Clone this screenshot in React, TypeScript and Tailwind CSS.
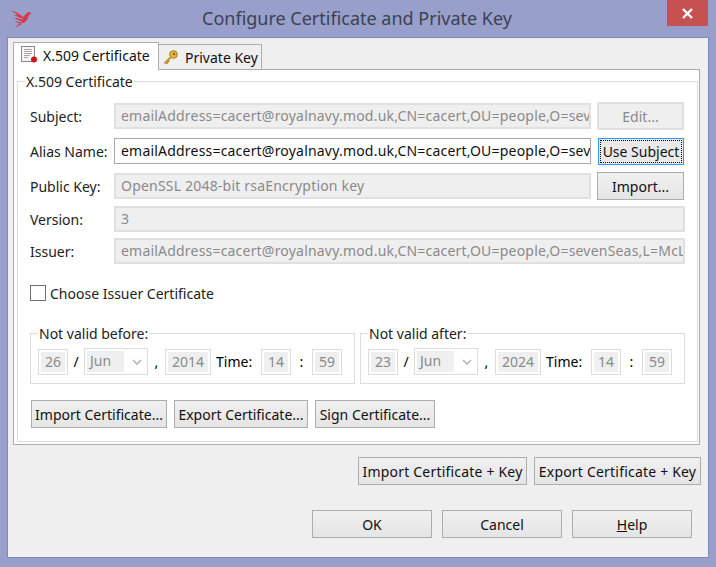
import type React from "react"

const font = "font-['Noto_Sans',sans-serif]"

function DisabledField({ value, className }: { value: string; className: string }) {
  return (
    <div className={`h-[26px] bg-[#efefef] border-2 border-[#e0e0e0] pl-[5px] text-[#8a8a8a] tracking-[0.2px] leading-[22px] overflow-hidden whitespace-nowrap ${className}`}>
      {value}
    </div>
  )
}

function Btn({ children, className = "" }: { children: React.ReactNode; className?: string }) {
  return (
    <div className={`h-[28px] flex items-center justify-center border border-[#adadad] bg-gradient-to-b from-[#f0f0f0] to-[#e5e5e5] text-[#111] whitespace-nowrap ${className}`}>
      {children}
    </div>
  )
}

function Row({ label, children, className = "" }: { label: string; children: React.ReactNode; className?: string }) {
  return (
    <div className={`flex items-center ${className}`}>
      <div className="w-[96px] pl-[12px] text-[#222] whitespace-nowrap">{label}</div>
      {children}
    </div>
  )
}

function SmallBox({ value, className }: { value: string; className: string }) {
  return (
    <div className={`h-[26px] border border-[#dcdcdc] p-[2px] ${className}`}>
      <div className="h-full bg-[#efefef] text-[#8a8a8a] text-center leading-[20px]">{value}</div>
    </div>
  )
}

function DateGroup({ title, day, year, className }: { title: string; day: string; year: string; className: string }) {
  return (
    <fieldset className={`border border-[#dcdcdc] h-[59px] ${className}`}>
      <legend className="ml-[7px] px-[1px] leading-[17px] text-[#222]">{title}</legend>
      <div className="flex items-center pl-[7px] mt-[6px]">
        <SmallBox value={day} className="w-[30px]" />
        <span className="w-[16px] text-center">/</span>
        <div className="h-[27px] w-[64px] border border-[#dcdcdc] p-[2px] flex items-center">
          <div className="w-[37px] h-full bg-[#efefef] text-[#8a8a8a] pl-[3px] leading-[20px]">Jun</div>
          <svg width="10" height="6" viewBox="0 0 10 6" className="ml-[8px]">
            <path d="M1 1l4 4 4-4" fill="none" stroke="#b5b5b5" strokeWidth="1.6" />
          </svg>
        </div>
        <span className="w-[17px] text-center">,</span>
        <SmallBox value={year} className="w-[46px]" />
        <span className="ml-[5px] w-[45px]">Time:</span>
        <SmallBox value="14" className="w-[30px]" />
        <span className="w-[21px] text-center">:</span>
        <SmallBox value="59" className="w-[30px]" />
      </div>
    </fieldset>
  )
}

export default function App() {
  return (
    <div className={`w-[716px] h-[567px] bg-[#989fcb] overflow-hidden relative text-[14px] ${font}`}>
      {/* Title bar */}
      <div className="h-[37px] flex items-center justify-center text-[18px] text-[#3c4252] pr-[2px] pb-[1px]">
        Configure Certificate and Private Key
      </div>
      <svg width="24" height="20" viewBox="0 0 24 20" className="absolute left-[9px] top-[9px]">
        <path d="M1 1l8 3 5 4 5-5 4 1-3 2-2 5-3 3-5 0-4-1 5-1-6-3 6 0-6-3 4 0z" fill="#d8384a" />
        <path d="M5 8l9 2M6 11l7 2" stroke="#989fcb" strokeWidth="1" />
        <path d="M6 18l5-4 2 1-4 2z" fill="#d8384a" />
      </svg>
      <div className="absolute right-[8px] top-0 w-[41px] h-[26px] bg-[#c75050] flex items-center justify-center">
        <svg width="11" height="11" viewBox="0 0 11 11">
          <path d="M1 1l9 9M10 1l-9 9" stroke="#fff" strokeWidth="2.4" />
        </svg>
      </div>

      {/* Dialog body */}
      <div className="mx-[7px] h-[521px] border border-[#7f88b4] bg-[#efefef] px-[5px] pt-[4px]">
        {/* Tabs */}
        <div className="flex items-end h-[27px]">
          <div className="h-[28px] w-[146px] bg-white border border-b-0 border-[#adadad] flex items-center pl-[7px] gap-[4px] pb-[3px] z-10 -mb-[1px] text-[#111]">
            <svg width="18" height="18" viewBox="0 0 18 18">
              <rect x="0.5" y="0.5" width="13" height="15" fill="#f6f6f6" stroke="#8a8a8a" />
              <path d="M3 3.5h8M3 5.5h8M3 7.5h8M3 9.5h6M3 11.5h4" stroke="#a8a8a8" />
              <circle cx="13" cy="13.5" r="3" fill="#d8101c" />
            </svg>
            X.509 Certificate
          </div>
          <div className="h-[25px] w-[103px] bg-[#efefef] border border-l-0 border-b-0 border-[#adadad] flex items-center pl-[3px] gap-[6px] text-[#111]">
            <svg width="17" height="17" viewBox="0 0 16 17">
              <circle cx="11" cy="5.5" r="3.8" fill="#e6b83e" stroke="#a87c1c" />
              <circle cx="11.5" cy="5" r="1.2" fill="#8a6414" />
              <path d="M8.5 8L2 14.5M3.5 13l2 1.5M5.2 11.3l1.5 1.5" stroke="#c2922a" strokeWidth="1.8" fill="none" />
            </svg>
            Private Key
          </div>
        </div>

        {/* Certificate pane */}
        <div className="w-[687px] h-[376px] bg-white border border-[#adadad] pt-[3px] pl-[3px] pr-[1px]">
          <fieldset className="border border-[#dcdcdc] h-[369px]">
            <legend className="ml-[7px] px-[1px] leading-[17px] text-[#222]">X.509 Certificate</legend>
            <div className="flex flex-col mt-[11px]">
              <Row label="Subject:" className="h-[30px]">
                <DisabledField value="emailAddress=cacert@royalnavy.mod.uk,CN=cacert,OU=people,O=sev" className="w-[477px]" />
                <div className="ml-[6px] w-[87px] h-[28px] flex items-center justify-center bg-[#efefef] border-2 border-[#e0e0e0] text-[#8a8a8a]">Edit...</div>
              </Row>
              <Row label="Alias Name:" className="h-[30px] mt-[5px]">
                <div className="h-[26px] w-[477px] bg-white border border-[#a9a9a9] pl-[6px] tracking-[0.2px] leading-[24px] overflow-hidden whitespace-nowrap text-[#111]">
                  emailAddress=cacert@royalnavy.mod.uk,CN=cacert,OU=people,O=sev
                </div>
                <div className="ml-[7px] w-[86px] h-[27px] border border-[#3399ff] p-[1px] bg-[#e9e9e9]">
                  <div className="h-full border border-dotted border-black flex items-center justify-center whitespace-nowrap text-[#111]">
                    Use Subject
                  </div>
                </div>
              </Row>
              <Row label="Public Key:" className="h-[30px] mt-[5px]">
                <DisabledField value="OpenSSL 2048-bit rsaEncryption key" className="w-[477px]" />
                <Btn className="ml-[6px] w-[87px]">Import...</Btn>
              </Row>
              <Row label="Version:" className="h-[26px] mt-[5px]">
                <DisabledField value="3" className="w-[571px]" />
              </Row>
              <Row label="Issuer:" className="h-[26px] mt-[6px]">
                <DisabledField value="emailAddress=cacert@royalnavy.mod.uk,CN=cacert,OU=people,O=sevenSeas,L=McL" className="w-[571px]" />
              </Row>
              <div className="flex items-center gap-[4px] ml-[12px] mt-[19px] h-[20px] text-[#222]">
                <div className="w-[16px] h-[16px] border border-[#707070] bg-white" />
                Choose Issuer Certificate
              </div>
              <div className="flex mt-[22px] ml-[12px] gap-[5px]">
                <DateGroup title="Not valid before:" day="26" year="2014" className="w-[325px]" />
                <DateGroup title="Not valid after:" day="23" year="2024" className="w-[325px]" />
              </div>
              <div className="flex gap-[7px] ml-[13px] mt-[16px]">
                <Btn className="w-[136px]">Import Certificate...</Btn>
                <Btn className="w-[134px]">Export Certificate...</Btn>
                <Btn className="w-[120px]">Sign Certificate...</Btn>
              </div>
            </div>
          </fieldset>
        </div>

        {/* Key buttons */}
        <div className="flex justify-end gap-[7px] mt-[12px] w-[688px]">
          <Btn className="w-[169px] tracking-[0.2px]">Import Certificate + Key</Btn>
          <Btn className="w-[167px] tracking-[0.2px]">Export Certificate + Key</Btn>
        </div>

        {/* Dialog buttons */}
        <div className="flex justify-end gap-[10px] mt-[25px] w-[679px]">
          <Btn className="w-[120px]">OK</Btn>
          <Btn className="w-[120px]">Cancel</Btn>
          <Btn className="w-[120px]"><span><span className="underline">H</span>elp</span></Btn>
        </div>
      </div>
    </div>
  )
}
